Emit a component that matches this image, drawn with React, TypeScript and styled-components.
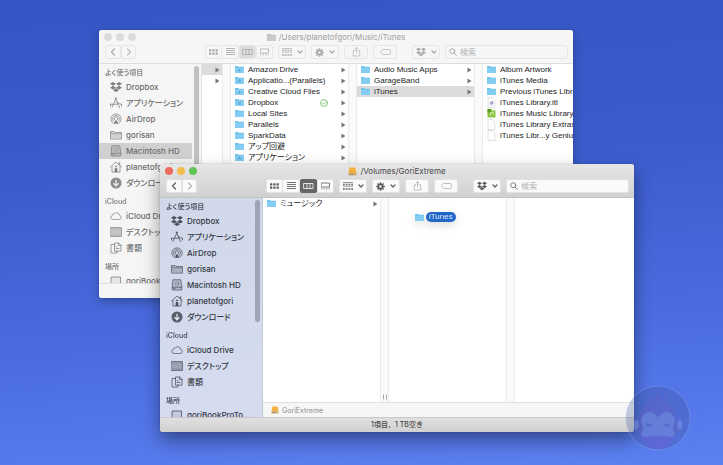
import React from "react";
import styled, { createGlobalStyle, css } from "styled-components";

const GlobalStyle = createGlobalStyle`
  *, *::before, *::after { box-sizing: border-box; }
  body { margin: 0; }
  button, input { font: inherit; color: inherit; margin: 0; padding: 0; }
  ul { list-style: none; margin: 0; padding: 0; }
`;

const Desktop = styled.main`
  position: relative;
  min-height: 100vh;
  overflow: hidden;
  background: linear-gradient(176deg, #3456c4 0%, #3a5bcb 35%, #4a6cdf 70%, #5b80f0 100%);
  font-family: Inter, "Noto Sans CJK JP", sans-serif;
  font-size: 8px;
  color: #222;
`;

const Window = styled.section<{ $active: boolean }>`
  position: absolute;
  display: flex;
  flex-direction: column;
  overflow: hidden;
  border-radius: 3px;
  background: #fff;
  ${(p) =>
    p.$active
      ? css`
          top: 164px;
          right: 89px;
          bottom: 33px;
          left: 160px;
          box-shadow: 0 0 1px rgba(0, 0, 0, 0.5), 0 8px 18px rgba(0, 0, 0, 0.4);
        `
      : css`
          top: 30px;
          right: 150px;
          bottom: 167px;
          left: 99px;
          box-shadow: 0 0 1px rgba(0, 0, 0, 0.3), 0 4px 10px rgba(0, 0, 0, 0.25);
        `}
`;

const Header = styled.header<{ $active: boolean }>`
  flex: none;
  border-bottom: 1px solid ${(p) => (p.$active ? "#c4c4c4" : "#dedede")};
  background: ${(p) => (p.$active ? "linear-gradient(#e6e6e6, #d1d1d1)" : "#f6f6f6")};
  color: ${(p) => (p.$active ? "#484848" : "#a0a0a0")};
`;

const TitleBar = styled.div`
  display: grid;
  grid-template-columns: 1fr auto 1fr;
  align-items: center;
  height: 14px;
  padding: 0 5px;
`;

const Lights = styled.div`
  display: flex;
  gap: 4px;
`;

const Light = styled.button<{ $color: string }>`
  width: 8px;
  height: 8px;
  border: 0;
  border-radius: 50%;
  background: ${(p) => p.$color};
`;

const Title = styled.h1`
  display: flex;
  align-items: center;
  gap: 3px;
  margin: 0;
  font-size: 8px;
  font-weight: 400;
  line-height: 12px;
  white-space: nowrap;
`;

const Toolbar = styled.div`
  display: flex;
  align-items: center;
  gap: 5px;
  height: 19px;
  padding: 0 5px 3px 6px;
`;

const Segment = styled.div<{ $gap: number }>`
  display: flex;
  margin-right: ${(p) => p.$gap}px;
`;

const ToolButton = styled.button<{ $active: boolean; $width: number; $on?: boolean; $dim?: boolean }>`
  display: flex;
  flex: none;
  align-items: center;
  justify-content: center;
  gap: 5px;
  width: ${(p) => p.$width}px;
  height: 14px;
  border: 1px solid ${(p) => (p.$on && p.$active ? "#666" : p.$active ? "#e2e2e2" : "#e6e6e6")};
  border-radius: 2px;
  background: ${(p) => (p.$on ? (p.$active ? "#666" : "#dcdcdc") : p.$active ? "#fafafa" : "#f6f6f6")};
  color: ${(p) => (p.$on && p.$active ? "#fff" : p.$dim ? (p.$active ? "#b0b0b0" : "#bbb") : p.$active ? "#5c5c5c" : "#a8a8a8")};
  ${Segment} > & + & {
    border-left-width: 0;
  }
`;

const Spacer = styled.div`
  flex: none;
  width: 5px;
`;

const Search = styled.label<{ $active: boolean }>`
  display: flex;
  flex: 1;
  align-items: center;
  gap: 3px;
  min-width: 0;
  height: 14px;
  padding: 0 3px;
  border: 1px solid ${(p) => (p.$active ? "#e2e2e2" : "#e6e6e6")};
  border-radius: 2px;
  background: ${(p) => (p.$active ? "#fafafa" : "#f6f6f6")};
  color: ${(p) => (p.$active ? "#777" : "#a8a8a8")};
`;

const SearchInput = styled.input`
  flex: 1;
  min-width: 0;
  height: 12px;
  border: 0;
  outline: 0;
  background: none;
  &::placeholder {
    color: #b4b4b4;
    opacity: 1;
  }
`;

const Body = styled.div`
  display: flex;
  flex: 1;
  min-height: 0;
`;

const Sidebar = styled.nav<{ $active: boolean }>`
  position: relative;
  flex: none;
  width: 103px;
  padding-top: 3px;
  overflow: hidden;
  border-right: 1px solid ${(p) => (p.$active ? "#c3c9da" : "#e4e4e4")};
  background: ${(p) => (p.$active ? "linear-gradient(#d0d8e9, #d5dcf0)" : "#f5f5f5")};
  color: ${(p) => (p.$active ? "#333742" : "#6c6c6c")};
`;

const ScrollThumb = styled.span<{ $active: boolean }>`
  position: absolute;
  top: 2px;
  right: 2px;
  width: 5px;
  height: 122px;
  border-radius: 3px;
  background: ${(p) => (p.$active ? "#9ea5b8" : "#c1c1c1")};
`;

const Group = styled.section`
  margin-bottom: 5px;
`;

const GroupName = styled.h2`
  margin: 0;
  padding-left: 6px;
  font-size: 7px;
  font-weight: 600;
  line-height: 12px;
  font-feature-settings: "palt";
  opacity: 0.8;
`;

const Place = styled.a<{ $selected?: boolean }>`
  display: flex;
  align-items: center;
  gap: 4px;
  height: 16px;
  margin-right: 9px;
  padding-left: 11px;
  background: ${(p) => (p.$selected ? "#d0d0d0" : "none")};
  color: inherit;
  font-weight: 500;
  line-height: 12px;
  text-decoration: none;
  white-space: nowrap;
  font-feature-settings: "palt";
  svg {
    flex: none;
    opacity: 0.85;
  }
`;

const Browser = styled.div`
  display: flex;
  flex: 1;
  flex-direction: column;
  min-width: 0;
`;

const Columns = styled.div`
  position: relative;
  display: flex;
  flex: 1;
  min-height: 0;
  overflow: hidden;
  font-family: "Liberation Sans", "Noto Sans CJK JP", sans-serif;
`;

const Column = styled.ul<{ $width?: number }>`
  flex: ${(p) => (p.$width ? `0 0 ${p.$width}px` : "1 0 0")};
  min-width: 0;
  overflow: hidden;
`;

const Gutter = styled.div`
  display: flex;
  flex: 0 0 9px;
  align-items: flex-end;
  justify-content: center;
  padding-bottom: 2px;
  border: 1px solid #ebebeb;
  border-width: 0 1px;
  background: #fafafa;
  color: #a6a6a6;
`;

const Entry = styled.a<{ $selected?: boolean }>`
  display: flex;
  align-items: center;
  gap: 4px;
  height: 11px;
  padding: 0 2px 0 4px;
  background: ${(p) => (p.$selected ? "#dcdcdc" : "none")};
  color: #1c1c1c;
  line-height: 11px;
  text-decoration: none;
  white-space: nowrap;
  font-feature-settings: "palt";
  svg {
    flex: none;
  }
`;

const EntryName = styled.span`
  flex: 1;
`;

const Dragged = styled.div`
  position: absolute;
  top: 14px;
  left: 152px;
  display: flex;
  align-items: center;
  gap: 2px;
  filter: drop-shadow(0 3px 4px rgba(0, 0, 0, 0.15));
`;

const DraggedName = styled.span`
  padding: 0 3px;
  border-radius: 5px;
  background: #2067c8;
  color: #e4eefb;
  line-height: 10px;
`;

const PathBar = styled.footer`
  display: flex;
  flex: none;
  align-items: center;
  gap: 3px;
  height: 15px;
  padding-left: 8px;
  border-top: 1px solid #e0e0e0;
  background: #f6f6f6;
  color: #8c8c8c;
  font-size: 7px;
`;

const StatusBar = styled.footer<{ $active: boolean }>`
  flex: none;
  height: 15px;
  border-top: 1px solid ${(p) => (p.$active ? "#c8c8c8" : "#e2e2e2")};
  background: ${(p) => (p.$active ? "linear-gradient(#e0e0e0, #d0d0d0)" : "#f6f6f6")};
  color: #484848;
  font-size: 7px;
  font-weight: 500;
  line-height: 14px;
  text-align: center;
`;

const Badge = styled.svg`
  position: absolute;
  right: 32px;
  bottom: 14px;
  opacity: 0.6;
`;

const Stroke = ({ w, h, box, children, sw = 1 }: { w: number; h: number; box: string; children: React.ReactNode; sw?: number }) => (
  <svg width={w} height={h} viewBox={box} fill="none" stroke="currentColor" strokeWidth={sw} strokeLinecap="round" strokeLinejoin="round" aria-hidden>
    {children}
  </svg>
);

const Chevron = ({ d }: { d: string }) => (
  <Stroke w={6} h={8} box="0 0 6 8" sw={1.2}>
    <path d={d} />
  </Stroke>
);
const DownChevron = () => <Chevron d="M1 3l2 2 2-2" />;

const GridIcon = () => (
  <svg width="9" height="8" viewBox="0 0 18 16" fill="currentColor" aria-hidden>
    {[0, 6.5, 13].map((x) => [2.5, 9].map((y) => <rect key={`${x}-${y}`} x={x} y={y} width="4.600" height="4.600" rx="1" />))}
  </svg>
);
const ListIcon = () => (
  <svg width="9" height="8" viewBox="0 0 9 8" fill="currentColor" aria-hidden>
    {[0, 2, 4, 6].map((y) => <rect key={y} y={y} width="9" height="1" opacity=".85" />)}
  </svg>
);
const ColumnsIcon = () => (
  <Stroke w={11} h={8} box="0 0 22 16" sw={1.6}>
    <path d="M2 3h18v10H2zM8 3v10M14 3v10" />
  </Stroke>
);
const GalleryIcon = () => (
  <Stroke w={9} h={8} box="0 0 18 16" sw={1.600}>
    <path d="M1 2h16v8H1zM1 13.500h1M6 13.500h1M11 13.500h1M16 13.500h1" />
  </Stroke>
);
const GroupIcon = () => (
  <svg width="10" height="9" viewBox="0 0 20 18" fill="currentColor" opacity=".85" aria-hidden>
    <path d="M0 0h20v1.400H0zM0 9h20v1.200H0z" />
    {[0, 5.5, 11, 16.5].map((x) => [3.4, 12.2].map((y) => <rect key={`${x}-${y}`} x={x} y={y} width="3.500" height="3.600" />))}
  </svg>
);
const GearIcon = () => (
  <svg width="9" height="9" viewBox="0 0 18 18" fill="none" stroke="currentColor" aria-hidden>
    <circle cx="9" cy="9" r="4.2" strokeWidth="3.6" />
    {[0, 45, 90, 135].map((a) => (
      <path key={a} d="M9 .4v4M9 13.6v4" strokeWidth="3" transform={`rotate(${a} 9 9)`} />
    ))}
  </svg>
);
const ShareIcon = () => (
  <Stroke w={9} h={10} box="0 0 18 20" sw={1.6}>
    <path d="M6 7.5H2.500V18h13V7.500H12M9 12V1.500M6 4.200l3-2.800 3 2.800" />
  </Stroke>
);
const TagIcon = () => (
  <Stroke w={11} h={8} box="0 0 22 16" sw={1.6}>
    <path d="M6 3h13.500a1 1 0 011 1v8a1 1 0 01-1 1H6L1.500 8z" />
  </Stroke>
);
const DropboxIcon = ({ size }: { size: number }) => (
  <svg width={size} height={size} viewBox="0 0 24 24" fill="currentColor" aria-hidden>
    <path d="M6 1.800L0 5.600l6 3.800 6-3.800zM18 1.800l-6 3.800 6 3.800 6-3.800zM0 13.300l6 3.800 6-3.800-6-3.800zM18 9.500l-6 3.800 6 3.800 6-3.800zM6 18.400l6 3.800 6-3.800-6-3.800z" />
  </svg>
);
const SearchIcon = () => (
  <Stroke w={8} h={8} box="0 0 16 16" sw={1.8}>
    <circle cx="6.500" cy="6.500" r="5" />
    <path d="M10.300 10.300L15 15" />
  </Stroke>
);

const AppsIcon = () => (
  <Stroke w={12} h={12} box="0 0 24 24" sw={1.6}>
    <path d="M12.300 2.500L4 20.500M10.500 2.500l4.500 9M1 14.500h13.500M10.500 2.500h3M1 14.500v3.500" />
    <path d="M14.500 11.500L19 21M15.500 10.500l3 3.500h4.500v4" />
  </Stroke>
);
const AirDropIcon = () => (
  <Stroke w={12} h={12} box="0 0 24 24" sw={1.5}>
    <path d="M6 20.500a10.300 10.300 0 1112 0M7.700 17.200a6.800 6.800 0 118.600 0M9.800 14.200a3.500 3.500 0 114.400 0" />
    <path d="M12 13.500l-5 8h10z" fill="currentColor" stroke="none" />
  </Stroke>
);
const FolderOutline = () => (
  <Stroke w={12} h={12} box="0 0 24 24" sw={1.3}>
    <path d="M1 19.500V5h7l2 2h13v12.500z" fill="currentColor" fillOpacity=".3" />
    <path d="M1 9.500h22" strokeOpacity=".7" />
  </Stroke>
);
const DiskIcon = () => (
  <Stroke w={12} h={12} box="0 0 24 24" sw={1.4}>
    <path d="M4.500 1.500h15l2 14.500v6h-19v-6z" fill="currentColor" fillOpacity=".25" />
    <path d="M2.500 16.500h19M5.500 19.300h3" />
    <circle cx="12" cy="9" r="3.500" strokeOpacity=".5" />
  </Stroke>
);
const HomeIcon = () => (
  <Stroke w={12} h={12} box="0 0 24 24" sw={1.5}>
    <path d="M1 12L12 2l11 10M4 11v11h16V11M18 7V3.500h1.500V8" />
    <circle cx="12" cy="11" r="1.500" />
    <path d="M10 22v-7h4v7" fill="currentColor" />
  </Stroke>
);
const DownloadIcon = () => (
  <svg width="12" height="12" viewBox="0 0 24 24" aria-hidden>
    <circle cx="12" cy="12" r="11" fill="currentColor" opacity=".9" />
    <path d="M12 5.500v12M7 12.500l5 5 5-5" fill="none" stroke="#e8ebf2" strokeWidth="2.600" />
  </svg>
);
const CloudIcon = () => (
  <Stroke w={12} h={12} box="0 0 24 24" sw={1.4}>
    <path d="M5.500 19a4.200 4.200 0 01-.5-8.300 3.400 3.400 0 014-3.200 5.800 5.800 0 0110.200 3.400A4.100 4.100 0 0118.800 19z" />
  </Stroke>
);
const DesktopIcon = () => (
  <Stroke w={12} h={12} box="0 0 24 24" sw={1.3}>
    <path d="M1 3h22v18H1z" fill="currentColor" fillOpacity=".4" />
    <path d="M3 6h18M3 18h18" strokeOpacity=".4" />
  </Stroke>
);
const DocsIcon = () => (
  <Stroke w={12} h={12} box="0 0 24 24" sw={1.500}>
    <path d="M9 17.500V2h8.500l4.500 4.500v11zM17 2v5h5M9 5H2v17h12v-4.500M12 9.500h2M12 13h6" />
  </Stroke>
);
const LaptopIcon = () => (
  <Stroke w={12} h={12} box="0 0 24 24" sw={1.600}>
    <path d="M3 4h18v14H3zM1 21h22" fill="currentColor" fillOpacity=".12" />
  </Stroke>
);

const Folder = ({ color = "#82cdf1", top = "#6dc0e8", mark }: { color?: string; top?: string; mark?: string }) => (
  <svg width="9" height="9" viewBox="0 0 18 18" aria-hidden>
    <path d="M0 3a1 1 0 011-1h5l1.500 1.500H17a1 1 0 011 1V8H0z" fill={top} />
    <path d="M0 5h18v10a1 1 0 01-1 1H1a1 1 0 01-1-1z" fill={color} />
    {mark && <path d={mark} fill="none" stroke="#4fa5d2" strokeWidth="1.700" />}
  </svg>
);
const marks: Record<string, string> = {
  folder: "",
  cloud: "M6 11.500h6M9 8v4",
  apps: "M6 13l3-6 3 6M6 11h6",
  box: "M6 8l3 2 3-2M6 11l3 2 3-2",
};
const DriveIcon = ({ size = 9 }: { size?: number }) => (
  <svg width={size} height={size} viewBox="0 0 18 18" aria-hidden>
    <path d="M3 1h12l2 11H1z" fill="#f1b13c" />
    <path d="M1 12h16v4a1 1 0 01-1 1H2a1 1 0 01-1-1z" fill="#c9ab78" />
    <path d="M3 14.500h8" stroke="#8a7c68" strokeWidth="1.400" />
  </svg>
);
const FileIcon = ({ kind }: { kind: string }) => (
  <svg width="9" height="11" viewBox="0 0 18 22" aria-hidden>
    {kind === "music" ? (
      <>
        <path d="M1 2h8l2 3h6v14H1z" fill="#86c440" />
        <path d="M1 2h7v7H1z" fill="#5a9e2e" />
        <path d="M7 15V9l5-1v6" stroke="#e7f6cf" fill="none" strokeWidth="1.600" />
      </>
    ) : (
      <path d="M2 1h9l5 5v15H2z" fill="#fdfdfd" stroke="#c6c6c6" />
    )}
    {kind === "itl" && (
      <>
        <circle cx="9" cy="13" r="4.500" fill="#e5daf2" />
        <path d="M8 15v-5l3-.6V14" stroke="#8272a8" fill="none" strokeWidth="1.400" />
      </>
    )}
  </svg>
);
const Arrow = () => (
  <svg width="5" height="6" viewBox="0 0 5 6" aria-hidden>
    <path d="M.5 .5l4 2.500-4 2.500z" fill="#757575" />
  </svg>
);
const Synced = () => (
  <Stroke w={8} h={8} box="0 0 16 16" sw={1.500}>
    <g stroke="#62b653">
      <circle cx="8" cy="8" r="7" />
      <path d="M4.800 8.200l2.300 2.300 4.200-4.700" />
    </g>
  </Stroke>
);

type PlaceItem = { name: string; icon: React.ReactNode };
const groups: { name: string; items: PlaceItem[] }[] = [
  {
    name: "よく使う項目",
    items: [
      { name: "Dropbox", icon: <DropboxIcon size={12} /> },
      { name: "アプリケーション", icon: <AppsIcon /> },
      { name: "AirDrop", icon: <AirDropIcon /> },
      { name: "gorisan", icon: <FolderOutline /> },
      { name: "Macintosh HD", icon: <DiskIcon /> },
      { name: "planetofgori", icon: <HomeIcon /> },
      { name: "ダウンロード", icon: <DownloadIcon /> },
    ],
  },
  {
    name: "iCloud",
    items: [
      { name: "iCloud Drive", icon: <CloudIcon /> },
      { name: "デスクトップ", icon: <DesktopIcon /> },
      { name: "書類", icon: <DocsIcon /> },
    ],
  },
  { name: "場所", items: [{ name: "goriBookProTo...", icon: <LaptopIcon /> }] },
];

type Item = { name: string; kind?: string; selected?: boolean; synced?: boolean };

const FileColumn = ({ items, width, arrows = true }: { items: Item[]; width?: number; arrows?: boolean }) => (
  <Column $width={width}>
    {items.map((item, i) => {
      const kind = item.kind ?? "folder";
      return (
        <li key={i}>
          <Entry href="#" $selected={item.selected} aria-label={item.name || "フォルダ"}>
            {item.name && (kind in marks ? <Folder mark={marks[kind]} /> : <FileIcon kind={kind} />)}
            <EntryName>{item.name}</EntryName>
            {item.synced && (
              <>
                <Synced />
                <Spacer />
              </>
            )}
            {arrows && <Arrow />}
          </Entry>
        </li>
      );
    })}
  </Column>
);

const ResizeGrip = () => (
  <Stroke w={4} h={6} box="0 0 4 6" sw={1}>
    <path d="M.5 1v4M3.500 1v4" />
  </Stroke>
);

type FinderProps = {
  active: boolean;
  title: string;
  titleIcon: React.ReactNode;
  selectedPlace?: string;
  path?: React.ReactNode;
  status?: string;
  children: React.ReactNode;
};

const Finder = ({ active, title, titleIcon, selectedPlace, path, status, children }: FinderProps) => {
  const lights = active ? ["#ee6a5f", "#f5bd4f", "#61c454"] : ["#dcdcdc", "#dcdcdc", "#dcdcdc"];
  return (
    <Window $active={active} aria-label={title}>
      <Header $active={active}>
        <TitleBar>
          <Lights>
            {["閉じる", "しまう", "拡大"].map((label, i) => (
              <Light key={label} $color={lights[i]} aria-label={label} />
            ))}
          </Lights>
          <Title>
            {titleIcon}
            {title}
          </Title>
        </TitleBar>
        <Toolbar>
          <Segment $gap={64}>
            <ToolButton $active={active} $width={16} aria-label="戻る"><Chevron d="M4.500 1L1.500 4l3 3" /></ToolButton>
            <ToolButton $active={active} $width={15} $dim aria-label="進む"><Chevron d="M1.500 1l3 3-3 3" /></ToolButton>
          </Segment>
          <Segment $gap={0}>
            <ToolButton $active={active} $width={17} aria-label="アイコン"><GridIcon /></ToolButton>
            <ToolButton $active={active} $width={17} aria-label="リスト"><ListIcon /></ToolButton>
            <ToolButton $active={active} $width={17} $on aria-label="カラム"><ColumnsIcon /></ToolButton>
            <ToolButton $active={active} $width={17} aria-label="ギャラリー"><GalleryIcon /></ToolButton>
          </Segment>
          <ToolButton $active={active} $width={28} aria-label="グループ"><GroupIcon /><DownChevron /></ToolButton>
          <ToolButton $active={active} $width={28} aria-label="アクション"><GearIcon /><DownChevron /></ToolButton>
          <ToolButton $active={active} $width={24} $dim aria-label="共有"><ShareIcon /></ToolButton>
          <ToolButton $active={active} $width={24} $dim aria-label="タグ"><TagIcon /></ToolButton>
          <Spacer />
          <ToolButton $active={active} $width={28} aria-label="Dropbox"><DropboxIcon size={10} /><DownChevron /></ToolButton>
          <Search $active={active}>
            <SearchIcon />
            <SearchInput type="search" placeholder="検索" aria-label="検索" />
          </Search>
        </Toolbar>
      </Header>
      <Body>
        <Sidebar $active={active}>
          {groups.map((group) => (
            <Group key={group.name}>
              <GroupName>{group.name}</GroupName>
              {group.items.map((item) => (
                <Place key={item.name} href="#" $selected={item.name === selectedPlace}>
                  {item.icon}
                  {item.name}
                </Place>
              ))}
            </Group>
          ))}
          <ScrollThumb $active={active} />
        </Sidebar>
        <Browser>
          <Columns>{children}</Columns>
          {path && <PathBar>{path}</PathBar>}
        </Browser>
      </Body>
      <StatusBar $active={active}>{status}</StatusBar>
    </Window>
  );
};

const homeFolders: Item[] = [
  { name: "Amazon Drive", kind: "cloud" },
  { name: "Applicatio...(Parallels)", kind: "apps" },
  { name: "Creative Cloud Files", kind: "cloud" },
  { name: "Dropbox", kind: "box", synced: true },
  { name: "Local Sites" },
  { name: "Parallels" },
  { name: "SparkData" },
  { name: "アップ回避" },
  { name: "アプリケーション", kind: "apps" },
];

export default function App() {
  return (
    <>
      <GlobalStyle />
      <Desktop>
        <Finder
          active={false}
          title="/Users/planetofgori/Music/iTunes"
          titleIcon={<Folder color="#c9c9c9" top="#bcbcbc" />}
          selectedPlace="Macintosh HD"
        >
          <FileColumn width={20} items={[{ name: "", selected: true }, { name: "" }]} />
          <Gutter />
          <FileColumn width={117} items={homeFolders} />
          <Gutter />
          <FileColumn
            width={117}
            items={[{ name: "Audio Music Apps" }, { name: "GarageBand" }, { name: "iTunes", selected: true }]}
          />
          <Gutter />
          <FileColumn
            arrows={false}
            items={[
              { name: "Album Artwork" },
              { name: "iTunes Media" },
              { name: "Previous iTunes Libraries" },
              { name: "iTunes Library.itl", kind: "itl" },
              { name: "iTunes Music Library.xml", kind: "music" },
              { name: "iTunes Library Extras.itdb", kind: "file" },
              { name: "iTunes Libr...y Genius.itdb", kind: "file" },
            ]}
          />
        </Finder>
        <Finder
          active
          title="/Volumes/GoriExtreme"
          titleIcon={<DriveIcon />}
          path={
            <>
              <DriveIcon size={8} />
              GoriExtreme
            </>
          }
          status="1項目、1 TB空き"
        >
          <FileColumn width={117} items={[{ name: "ミュージック" }]} />
          <Gutter>
            <ResizeGrip />
          </Gutter>
          <FileColumn width={117} items={[]} />
          <Gutter />
          <FileColumn items={[]} />
          <Dragged>
            <Folder />
            <DraggedName>iTunes</DraggedName>
          </Dragged>
        </Finder>
        <Badge width="66" height="66" viewBox="0 0 66 66" aria-hidden>
          <circle cx="33" cy="33" r="32" fill="#3c4c92" fillOpacity=".45" stroke="#90a6ea" strokeOpacity=".6" />
          <path
            d="M33 62C24 62 18 56 16 48c-4 0-6-3-6-7 0-5 2-7 5-6 0-9 3-12 8-18 1-4 0-5 1-9l4 7c3-3 3-7 4-13l4 12c3-1 5-4 6-8 1 5 0 8 0 11 6 3 9 10 9 18 4-1 6 2 6 6s-3 7-7 7c-2 8-9 14-17 14z"
            fill="#6458b4"
            fillOpacity=".6"
          />
          <path
            d="M33 33c-3-7-13-8-16-1-2 5 1 8 1 11 0 4-3 4-1 8 3 3 9 2 16 2s13 1 16-2c2-4-1-4-1-8 0-3 3-6 1-11-3-7-13-6-16 1z"
            fill="#7892d4"
            fillOpacity=".7"
          />
          <path d="M20 38l9 2-6 2zM46 38l-9 2 6 2z" fill="#4a58b4" fillOpacity=".8" />
          <path d="M16 51c7 3 11-3 17 0 6-3 10 3 17 0-2 8-9 13-17 13s-15-5-17-13z" fill="#6658c9" fillOpacity=".85" />
          <path d="M11 35c4 0 4 8 0 10-3-2-3-9 0-10zM55 35c-4 0-4 8 0 10 3-2 3-9 0-10z" fill="#8ba3e2" fillOpacity=".6" />
        </Badge>
      </Desktop>
    </>
  );
}
